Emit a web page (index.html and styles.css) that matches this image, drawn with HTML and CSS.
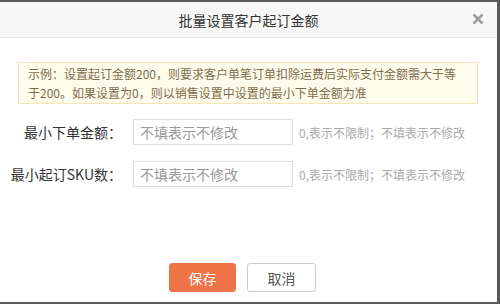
FILE: index.html
```html
<!DOCTYPE html>
<html lang="zh-CN">
<head>
<meta charset="utf-8">
<link rel="stylesheet" href="styles.css">
</head>
<body>
<div class="dialog">
  <div class="header">
    <span class="title">批量设置客户起订金额</span>
    <svg class="close" width="12" height="12" viewBox="0 0 12 12"><path d="M1.5 1.5 L10.5 10.5 M10.5 1.5 L1.5 10.5" stroke="#a0a0a0" stroke-width="2.6" stroke-linecap="butt"/></svg>
  </div>
  <div class="body">
    <div class="alert">示例：设置起订金额200，则要求客户单笔订单扣除运费后实际支付金额需大于等于200。如果设置为0，则以销售设置中设置的最小下单金额为准</div>
    <div class="row">
      <label class="label">最小下单金额：</label>
      <input class="input" type="text" placeholder="不填表示不修改">
      <span class="hint">0,表示不限制；不填表示不修改</span>
    </div>
    <div class="row">
      <label class="label">最小起订SKU数：</label>
      <input class="input" type="text" placeholder="不填表示不修改">
      <span class="hint">0,表示不限制；不填表示不修改</span>
    </div>
  </div>
  <div class="footer">
    <button class="btn btn-primary">保存</button>
    <button class="btn btn-default">取消</button>
  </div>
</div>
</body>
</html>
```
FILE: styles.css
```css
html, body {
  margin: 0;
  padding: 0;
  background: #5a5a5a;
  width: 500px;
  height: 304px;
  overflow: hidden;
  font-family: "Noto Sans CJK SC", "Noto Sans", sans-serif;
}
.dialog {
  margin-top: 2px;
  width: 497px;
  height: 300px;
  background: #fff;
  display: flex;
  flex-direction: column;
}
.header {
  height: 35px;
  background: #f7f7f7;
  border-bottom: 1px solid #e8e8e8;
  display: flex;
  align-items: center;
  justify-content: center;
  position: relative;
}
.title {
  font-size: 14px;
  color: #333;
}
.close {
  position: absolute;
  right: 13px;
  top: 11px;
}
.body {
  padding: 24px 19px 0 18px;
  flex: 1;
}
.alert {
  box-sizing: border-box;
  width: 460px;
  border: 1px solid #f3e5bd;
  background: #fffcec;
  color: #7d6d4e;
  font-size: 12px;
  line-height: 19px;
  padding: 1px 14px 1px 9px;
}
.row {
  display: flex;
  align-items: center;
  margin-left: -18px;
}
.alert + .row { margin-top: 15px; }
.row + .row { margin-top: 16px; }
.label {
  width: 122px;
  text-align: right;
  font-size: 14px;
  color: #333;
  margin-right: 11px;
}
.input {
  box-sizing: border-box;
  width: 160px;
  height: 26px;
  border: 1px solid #ddd;
  padding: 0 6px;
  font-size: 14px;
  font-family: inherit;
  outline: none;
}
.input::placeholder {
  color: #999;
}
.hint {
  margin-left: 6px;
  font-size: 12px;
  color: #aaa;
}
.footer {
  display: flex;
  justify-content: center;
  gap: 11px;
  padding: 0 12px 0 0;
  height: 39px;
}
.btn {
  box-sizing: border-box;
  height: 29px;
  border-radius: 3px;
  font-size: 14px;
  font-family: inherit;
  cursor: pointer;
}
.btn-primary {
  width: 67px;
  background: #ee7347;
  border: 1px solid #ee7347;
  color: #fff;
}
.btn-default {
  width: 69px;
  background: #fff;
  border: 1px solid #ccc;
  color: #555;
}
```
